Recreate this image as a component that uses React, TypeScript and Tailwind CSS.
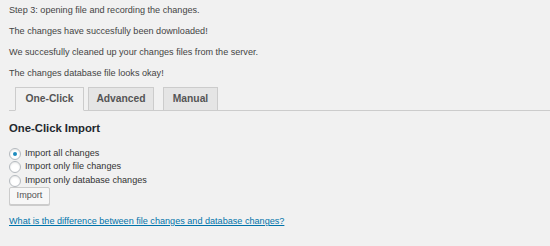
import { useState } from 'react';

const font = { fontFamily: '"Liberation Sans", Arial, sans-serif' };

const messages = [
  'Step 3: opening file and recording the changes.',
  'The changes have succesfully been downloaded!',
  'We succesfully cleaned up your changes files from the server.',
  'The changes database file looks okay!',
];

const tabs = [
  { label: 'One-Click', cls: 'ml-[6px] w-[69px]' },
  { label: 'Advanced', cls: 'ml-[4px] w-[66px]' },
  { label: 'Manual', cls: 'ml-[9px] w-[55px]' },
];

const options = ['Import all changes', 'Import only file changes', 'Import only database changes'];

const App = () => {
  const [tab, setTab] = useState('One-Click');
  const [choice, setChoice] = useState(0);

  return (
    <div className="w-[550px] h-[246px] bg-[#f1f1f1] text-[#444] overflow-hidden" style={font}>
      {/* Status messages */}
      <div className="pl-[9px] pt-[4px]">
        {messages.map((m) => (
          <p key={m} className="text-[9.1px] leading-[13px] mb-[8px]">
            {m}
          </p>
        ))}
      </div>

      {/* Tabs */}
      <div className="ml-[9px] mt-[-2px] flex items-end border-b border-[#ccc] h-[25px]">
        {tabs.map((t) => {
          const active = tab === t.label;
          return (
            <button
              key={t.label}
              onClick={() => setTab(t.label)}
              className={`${t.cls} h-[24px] mb-[-1px] border border-[#ccc] text-[10.3px] font-bold text-[#555] flex items-center justify-center ${
                active ? 'bg-[#f1f1f1] border-b-[#f1f1f1] text-[#000]' : 'bg-[#e5e5e5]'
              }`}
            >
              {t.label}
            </button>
          );
        })}
      </div>

      {/* One-Click panel */}
      <div className="pl-[9px]">
        <h2 className="mt-[10px] text-[11.3px] leading-[14px] font-semibold text-[#23282d]">One-Click Import</h2>

        <div className="mt-[12px] flex flex-col gap-[0.5px]">
          {options.map((o, i) => (
            <label key={o} className="flex items-center h-[13px] text-[9.1px] text-[#333] cursor-pointer">
              <span
                onClick={() => setChoice(i)}
                className="w-[12px] h-[12px] rounded-full border border-[#b4b9be] bg-white shadow-[inset_0_1px_2px_rgba(0,0,0,0.1)] flex items-center justify-center"
              >
                {choice === i && <span className="w-[4px] h-[4px] rounded-full bg-[#1e8cbe]" />}
              </span>
              <span className="ml-[4px]">{o}</span>
            </label>
          ))}
        </div>

        <button className="block mt-[0px] w-[41px] h-[18px] rounded-[2px] border border-[#ccc] bg-[#f7f7f7] shadow-[0_1px_0_#ccc] text-[9.1px] text-[#555]">
          Import
        </button>

        <div className="mt-[7px] leading-[13px]">
          <a href="#" className="text-[9.1px] text-[#0073aa] underline">
            What is the difference between file changes and database changes?
          </a>
        </div>
      </div>
    </div>
  );
};

export default App;
